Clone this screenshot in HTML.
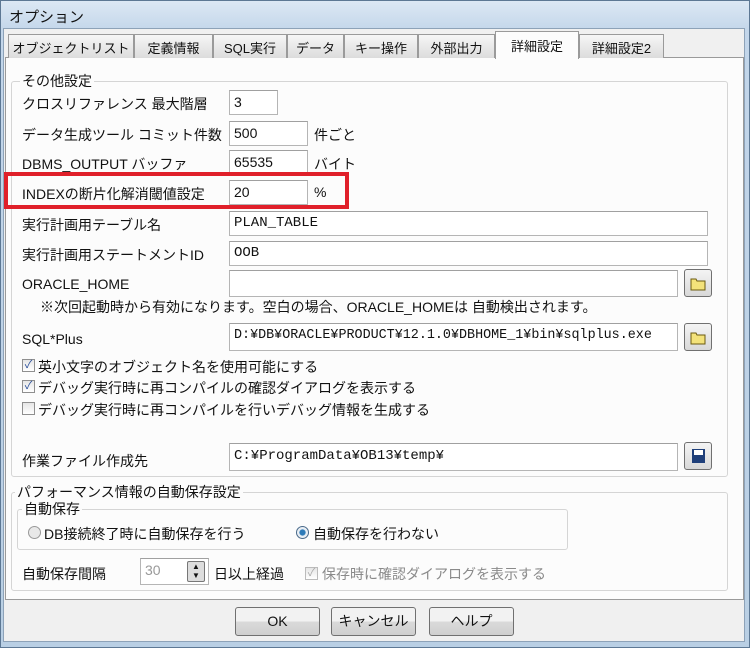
<!DOCTYPE html>
<html><head><meta charset="utf-8"><style>
*{box-sizing:border-box;margin:0;padding:0}
body{width:750px;height:648px;background:#bfd3e6;font-family:"Liberation Sans","Noto Sans CJK JP",sans-serif;font-size:14px;color:#111;position:relative;overflow:hidden}
.a{position:absolute;white-space:nowrap}
.win{position:absolute;left:0;top:0;width:750px;height:648px;border:1px solid #5d7894;background:linear-gradient(#dce8f4,#c3d6ea 30px,#b9cfe4)}
.title{left:9px;top:6px;font-size:15px;color:#111}
.dlg{left:3px;top:28px;width:742px;height:614px;background:#f0f0f0;border:1px solid #8da2b8}
.tab{top:34px;height:24px;border:1px solid #9a9a9a;border-bottom:none;background:linear-gradient(#f6f6f6,#dcdcdc);padding:3px 0 0;font-size:13px;text-align:center;overflow:hidden}
.tab.on{top:31px;height:28px;background:#fcfcfc;z-index:3;padding-top:4px}
.panel{left:5px;top:57px;width:739px;height:543px;background:#fcfcfc;border:1px solid #9a9a9a}
.grp{border:1px solid #d5d5d5;border-radius:3px}
.lg{background:#fcfcfc;padding:0 2px}
.in{height:25px;border:1px solid #b5b5b5;border-top-color:#a0a0a0;background:#fff;padding:3px 4px;font-size:14px}
.mono{font-family:"Liberation Mono","Noto Sans CJK JP",monospace;font-size:14px}
.btn{width:28px;height:28px;border:1px solid #707070;border-radius:3px;background:linear-gradient(#f4f4f4,#d8d8d8)}
.cb{width:13px;height:13px;border:1px solid #8f8f8f;background:linear-gradient(#e6e6e6,#fff);font-size:11px;line-height:11px;text-align:center;color:#2a4f9a}
.pb{width:85px;height:29px;border:1px solid #707070;border-radius:3px;background:linear-gradient(#f2f2f2 50%,#dadada 50%,#cfcfcf);text-align:center;line-height:27px;font-size:14px}
</style></head><body>
<div class="win"></div>
<div class="a title">オプション</div>
<div class="a dlg"></div>
<div class="a panel"></div>
<div class="a tab" style="left:8px;width:126px">オブジェクトリスト</div>
<div class="a tab" style="left:134px;width:79px">定義情報</div>
<div class="a tab" style="left:213px;width:74px">SQL実行</div>
<div class="a tab" style="left:287px;width:57px">データ</div>
<div class="a tab" style="left:344px;width:74px">キー操作</div>
<div class="a tab" style="left:418px;width:77px">外部出力</div>
<div class="a tab on" style="left:495px;width:84px">詳細設定</div>
<div class="a tab" style="left:579px;width:85px">詳細設定2</div>

<div class="a grp" style="left:11px;top:81px;width:717px;height:396px"></div>
<div class="a lg" style="left:20px;top:71px">その他設定</div>

<div class="a" style="left:22px;top:94px">クロスリファレンス 最大階層</div>
<div class="a in" style="left:229px;top:90px;width:49px">3</div>
<div class="a" style="left:22px;top:125px">データ生成ツール コミット件数</div>
<div class="a in" style="left:229px;top:121px;width:79px">500</div>
<div class="a" style="left:314px;top:125px">件ごと</div>
<div class="a" style="left:22px;top:154px">DBMS_OUTPUT バッファ</div>
<div class="a in" style="left:229px;top:150px;width:79px">65535</div>
<div class="a" style="left:314px;top:154px">バイト</div>
<div class="a" style="left:22px;top:184px">INDEXの断片化解消閾値設定</div>
<div class="a in" style="left:229px;top:180px;width:79px">20</div>
<div class="a" style="left:314px;top:184px">%</div>
<div class="a" style="left:4px;top:172px;width:345px;height:37px;border:4px solid #e0202a"></div>
<div class="a" style="left:22px;top:215px">実行計画用テーブル名</div>
<div class="a in mono" style="left:229px;top:211px;width:479px">PLAN_TABLE</div>
<div class="a" style="left:22px;top:245px">実行計画用ステートメントID</div>
<div class="a in mono" style="left:229px;top:241px;width:479px">OOB</div>
<div class="a" style="left:22px;top:276px">ORACLE_HOME</div>
<div class="a in" style="left:229px;top:270px;width:449px;height:27px"></div>
<div class="a btn" style="left:684px;top:269px"><svg width="26" height="26"><path d="M6 9h5l1 2h8v9H6z" fill="#f3e27a" stroke="#6b5a10"/></svg></div>
<div class="a" style="left:40px;top:297px">※次回起動時から有効になります。空白の場合、ORACLE_HOMEは 自動検出されます。</div>
<div class="a" style="left:22px;top:331px">SQL*Plus</div>
<div class="a in mono" style="left:229px;top:323px;width:449px;height:28px;padding-top:4px;font-size:13.4px;overflow:hidden">D:¥DB¥ORACLE¥PRODUCT¥12.1.0¥DBHOME_1¥bin¥sqlplus.exe</div>
<div class="a btn" style="left:684px;top:323px"><svg width="26" height="26"><path d="M6 9h5l1 2h8v9H6z" fill="#f3e27a" stroke="#6b5a10"/></svg></div>
<div class="a cb" style="left:22px;top:359px">✓</div>
<div class="a" style="left:38px;top:357px">英小文字のオブジェクト名を使用可能にする</div>
<div class="a cb" style="left:22px;top:380px">✓</div>
<div class="a" style="left:38px;top:378px">デバッグ実行時に再コンパイルの確認ダイアログを表示する</div>
<div class="a cb" style="left:22px;top:402px"></div>
<div class="a" style="left:38px;top:400px">デバッグ実行時に再コンパイルを行いデバッグ情報を生成する</div>
<div class="a" style="left:22px;top:451px">作業ファイル作成先</div>
<div class="a in mono" style="left:229px;top:443px;width:449px;height:28px;padding-top:4px">C:¥ProgramData¥OB13¥temp¥</div>
<div class="a btn" style="left:684px;top:442px"><svg width="26" height="26"><rect x="7" y="6" width="13" height="14" fill="#1f3f7a"/><rect x="9" y="7" width="9" height="5" fill="#fff"/></svg></div>

<div class="a grp" style="left:11px;top:492px;width:717px;height:99px"></div>
<div class="a lg" style="left:15px;top:482px;background:#fcfcfc">パフォーマンス情報の自動保存設定</div>
<div class="a grp" style="left:17px;top:509px;width:551px;height:41px"></div>
<div class="a lg" style="left:22px;top:499px">自動保存</div>
<div class="a" style="left:28px;top:526px;width:13px;height:13px;border-radius:50%;border:1px solid #999;background:#e8e8e8"></div>
<div class="a" style="left:44px;top:524px">DB接続終了時に自動保存を行う</div>
<div class="a" style="left:296px;top:526px;width:13px;height:13px;border-radius:50%;border:1px solid #4a6a8a;background:radial-gradient(#2d7ab8 35%,#e8eef4 45%)"></div>
<div class="a" style="left:313px;top:524px">自動保存を行わない</div>
<div class="a" style="left:22px;top:564px">自動保存間隔</div>
<div class="a in" style="left:140px;top:558px;width:69px;height:27px;color:#999">30</div>
<div class="a" style="left:187px;top:561px;width:18px;height:21px;border:1px solid #777;border-radius:2px;background:#ddd;font-size:8px;line-height:9px;text-align:center">▲<br>▼</div>
<div class="a" style="left:214px;top:564px">日以上経過</div>
<div class="a cb" style="left:305px;top:567px;color:#aaa;border-color:#bbb">✓</div>
<div class="a" style="left:322px;top:564px;color:#8a8a8a">保存時に確認ダイアログを表示する</div>

<div class="a pb" style="left:235px;top:607px">OK</div>
<div class="a pb" style="left:331px;top:607px">キャンセル</div>
<div class="a pb" style="left:429px;top:607px">ヘルプ</div>
</body></html>
